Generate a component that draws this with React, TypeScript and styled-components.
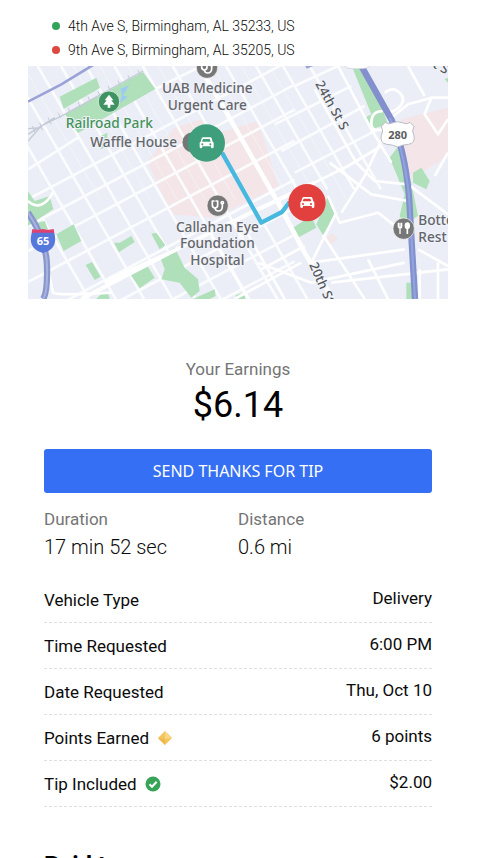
import React from "react";
import styled, { createGlobalStyle } from "styled-components";

const GlobalStyle = createGlobalStyle`
  * { box-sizing: border-box; }
  body {
    margin: 0;
    background: #fff;
    color: #0b0b0b;
    font-family: Roboto, "Liberation Sans", sans-serif;
    font-size: 17px;
  }
`;

const Page = styled.main`
  padding: 14px 32px 24px 28px;
`;

const Stops = styled.ul`
  list-style: none;
  margin: 0;
  padding: 0 24px 4px;
`;

const Stop = styled.li<{ $color: string }>`
  display: flex;
  align-items: center;
  gap: 8px;
  font-size: 14px;
  font-weight: 300;
  line-height: 24px;
  &::before {
    content: "";
    width: 8px;
    height: 8px;
    border-radius: 50%;
    background: ${(p) => p.$color};
  }
`;

const MapSvg = styled.svg`
  display: block;
  width: 100%;
  height: auto;
  font-family: "Noto Sans", sans-serif;
`;

const PlaceLabel = styled.text`
  font-size: 41px;
  font-weight: 500;
  fill: #63666a;
  stroke: #f1f3f9;
  stroke-width: 6px;
  paint-order: stroke;
`;

const ParkLabel = styled(PlaceLabel)`
  fill: #43915a;
`;

const StreetLabel = styled(PlaceLabel)`
  font-size: 39px;
  fill: #55585d;
`;

const Details = styled.section`
  padding: 56px 16px 0;
`;

const Earnings = styled.div`
  text-align: center;
`;

const Caption = styled.div`
  color: #757575;
  font-weight: 400;
  line-height: 28px;
`;

const Amount = styled.div`
  color: #000;
  font-size: 36px;
  line-height: 44px;
`;

const ThanksButton = styled.button`
  display: block;
  width: 100%;
  margin-top: 22px;
  padding: 10px;
  border: 0;
  border-radius: 3px;
  background: #356ff3;
  color: #fff;
  font-family: "Noto Sans", sans-serif;
  font-size: 16px;
  line-height: 24px;
`;

const Stats = styled.dl`
  display: grid;
  grid-template-columns: 1fr 1fr;
  margin: 0;
  padding: 12px 0 16px;
`;

const StatName = styled.dt`
  color: #757575;
  line-height: 28px;
`;

const StatValue = styled.dd`
  margin: 0;
  font-size: 20px;
  font-weight: 300;
  line-height: 28px;
`;

const Facts = styled.dl`
  margin: 0;
`;

const Fact = styled.div`
  display: flex;
  justify-content: space-between;
  align-items: flex-start;
  padding: 11px 0 10px;
  border-bottom: 1px dashed #e0e0e0;
`;

const FactName = styled.dt`
  display: flex;
  align-items: center;
  gap: 8px;
  line-height: 24px;
`;

const FactValue = styled.dd`
  margin: 0;
  line-height: 20px;
`;

const PaidHeading = styled.h2`
  margin: 44px 0 0;
  color: #000;
  font-size: 24px;
  font-weight: 700;
  line-height: 28px;
`;

const avenues = [400, 480, 555, 648, 765, 850, 930, 1010];
const streets = [-221, -141, -56, 29, 99, 174, 259, 344, 434, 594, 684, 765, 845];
const minorStreets = [-14, 136, 216, 300, 390, 554, 640, 725];

const Car = () => (
  <path
    fill="#fff"
    fillRule="evenodd"
    d="M-12-17h24q3 0 4 3l3 10 3 3v13q0 4-4 4t-4-4v-2h-26v2q0 4-4 4t-4-4V-1l3-3 3-10q1-3 4-3zM-10-12l-3 8h26l-3-8zM-12 1a3 3 0 1 0 .1 0zM12 1a3 3 0 1 0 .1 0z"
  />
);

const Stethoscope = () => (
  <g fill="none" stroke="#fff" strokeWidth="5" strokeLinecap="round" strokeLinejoin="round">
    <path d="M-11-14h-5v12q0 9 8 9t8-9v-12h-5" />
    <path d="M-8 7q1 9 10 9 11 0 12-12v-7" />
    <circle cx="14" cy="-9" r="3.5" />
  </g>
);

function RouteMap() {
  return (
    <MapSvg viewBox="0 0 1260 699" role="img" aria-label="Route map">
      <rect width="1260" height="699" fill="#ebeef7" />

      <g fill="#f4e5e8">
        <path d="M358 285 440 185 520 160 540 210 690 165 752 360 560 455 430 445z" />
        <path d="M1120 160 1260 125V270L1150 340 1120 240z" />
        <path d="M910 500 930 515 910 535 893 520z" />
      </g>

      <g fill="none" stroke="#fbfcfe" strokeLinejoin="round">
        <g strokeWidth="8">
          {avenues.map((y) => (
            <path key={y} d={`M0 ${y} 800 ${y - 424}`} />
          ))}
          <path d="M0 310 150 215M382 69 520 0" />
        </g>
        <g strokeWidth="8">
          {streets.map((x) => (
            <path key={x} d={`M${x} 0 ${x > 440 ? x + 214 : x + 404} ${x > 440 ? 370 : 699}`} />
          ))}
        </g>
        <g strokeWidth="3" opacity=".5">
          {minorStreets.map((x) => (
            <path key={x} d={`M${x} 0 ${x + 231} 400`} />
          ))}
        </g>
        <path strokeWidth="8" d="M800 60 930 0M740 175 970 60M760 255 1010 120M800 320 1050 190" />
      </g>

      <g fill="#afe0b9">
        <path d="M95 92 205 35 216 66 107 128z" />
        <path d="M110 144 345 18 382 69 150 201z" />
        <path d="M218 210 238 200 238 240 218 250z" />
        <path d="M0 375 20 405 65 390 76 430 0 480z" />
        <path d="M30 470 50 465 60 490H25z" />
        <path d="M85 505 137 475 160 525 107 555z" />
        <path d="M258 530 275 530 310 510 320 528 273 559z" />
        <path d="M173 597 192 588 218 632 200 642z" />
        <path d="M307 625 355 595 380 635 335 667z" />
        <path d="M370 503 385 500 412 538 395 550z" />
        <path d="M395 570 440 545 470 605 510 640 515 675 490 695 455 650 400 640 410 610z" />
        <path d="M205 699 220 683 240 680 245 699zM495 699 560 670 563 690 545 699zM620 699 625 687 650 680 652 699z" />
        <path d="M795 485 850 450 865 485 812 514z" />
        <path d="M865 475 900 390 925 440 885 507z" />
        <path d="M975 10 1003 5 1060 120 1080 175 1030 190 1010 155 1030 145z" />
        <path d="M1085 275 1115 235 1150 350 1170 450 1130 475 1115 450 1130 385z" />
        <path d="M1155 320 1180 305 1205 345 1195 370 1155 350z" />
        <path d="M1135 650h22l4 49h-26zM1250 40 1260 35V50z" />
      </g>
      <path d="M278 68 304 58 285 88 298 93 275 112 282 88z" fill="#9dc9f6" />

      <g fill="none" stroke="#fff" strokeWidth="8" strokeLinejoin="round">
        <path strokeWidth="14" d="M514 0 590 130 750 410 830 560 915 699" />
        <path strokeWidth="12" d="M160 699 430 558 690 430 860 350M430 558 230 649" />
        <path d="M0 405Q40 440 75 380M50 560 75 680Q90 690 250 680" />
        <path d="M930 0 1030 190 1090 290M860 70 985 290 1040 345 1140 355M860 350 960 300 1060 240" />
        <path d="M905 290 1030 385 1140 405M940 440 1010 330 1075 190M900 390 935 470 1050 440 1140 510" />
        <path d="M1090 155 1140 115 1210 95 1260 95M1210 95 1190 145 1230 205 1260 160M1260 260 1220 330" />
        <path d="M1140 355 1260 445M850 590 1130 550M910 650 1260 610M690 590 850 650 1130 590M1020 580 1080 699" />
        <path d="M1070 80q25-20 45 0t0 42-45 12M1065 135q-35 0-35 35t45 15M1140 0 1190 90" />
        <path d="M885 507 1010 699M750 400 870 640M925 440 850 590M1170 550 1260 600M1175 610V699M1230 590V699" />
        <path d="M640 470 770 699M550 510 660 699M700 610 830 540M620 699 820 590" />
      </g>

      <g fill="none" stroke="#c3cbd6">
        <path strokeWidth="4" d="M0 225 40 180 110 145 345 15M0 188 40 185M0 205 80 155" />
        <path
          strokeWidth="3"
          d="M13 180l8 20M35 170l8 22M60 155l10 20M90 140l8 16M120 125l8 16M150 108l8 18M180 92l8 18M210 76l8 18M240 60l8 18M270 44l8 18M300 28l8 18M330 12l8 18"
        />
      </g>

      <g fill="none" strokeLinecap="butt">
        <path d="M0 107 100 55 195-3" stroke="#9ba2d7" strokeWidth="8" />
        <path d="M0 440Q55 520 57 600T45 699" stroke="#8996cc" strokeWidth="19" />
        <path d="M0 440Q55 520 57 600T45 699" stroke="#a7b4df" strokeWidth="6" />
        <path d="M1000 0 1090 160Q1130 250 1143 390L1161 699" stroke="#8490ce" strokeWidth="19" />
        <path d="M1085 155Q1128 250 1143 390L1161 699" stroke="#91a5dd" strokeWidth="6" />
      </g>
      <path d="M832 0h24l-20 8z" fill="#9ba2d7" />

      <path d="M945-4h85q-8 14-42 12-34 2-43-12z" fill="#fff" stroke="#c9ccd3" strokeWidth="2" />
      <path
        d="M1072 169q10 8 20 2 17-8 34 0 10 6 20-2l12 12q-8 14 0 28 5 22-16 26-19 1-33 8-14-7-33-8-21-4-16-26 8-14 0-28z"
        fill="#fff"
        stroke="#b9bdc7"
        strokeWidth="3"
      />
      <text x="1109" y="218" textAnchor="middle" fontSize="33" fontWeight="700" fill="#5b5d61">280</text>

      <path d="M12 498h66q15 50-33 63-48-13-33-63z" fill="#5677dc" />
      <path d="M13 489q16 5 32 0 16 5 32 0l2 11H11z" fill="#de4370" />
      <text x="45" y="538" textAnchor="middle" fontSize="33" fontWeight="700" fill="#fff">65</text>

      <path d="M582 260 700 470 762 438 785 408" fill="none" stroke="#49b8df" strokeWidth="13" strokeLinejoin="round" />

      <g stroke="#fff" strokeWidth="2">
        <circle cx="243" cy="107" r="32" fill="#3f9362" />
        <circle cx="537" cy="5" r="32" fill="#777" />
        <circle cx="493" cy="229" r="31" fill="#777" />
        <circle cx="569" cy="419" r="32" fill="#777" />
        <circle cx="1127" cy="488" r="32" fill="#777" />
      </g>
      <path d="M243 86 230 103h6l-10 13h13v9h8v-9h13l-10-13h6z" fill="#fff" />
      <g transform="translate(537 5)"><Stethoscope /></g>
      <g transform="translate(569 419)"><Stethoscope /></g>
      <path d="M1111 470v10q0 6 5 6t5-6v-10M1116 470v34" fill="none" stroke="#fff" strokeWidth="4" />
      <path d="M1138 504v-20" stroke="#fff" strokeWidth="5" />
      <ellipse cx="1138" cy="479" rx="8" ry="10" fill="#fff" />

      <ParkLabel x="244" y="185" textAnchor="middle">Railroad Park</ParkLabel>
      <PlaceLabel x="317" y="242" textAnchor="middle">Waffle House</PlaceLabel>
      <PlaceLabel x="538" y="82" textAnchor="middle">UAB Medicine</PlaceLabel>
      <PlaceLabel x="538" y="132" textAnchor="middle">Urgent Care</PlaceLabel>
      <PlaceLabel x="568" y="497" textAnchor="middle">Callahan Eye</PlaceLabel>
      <PlaceLabel x="568" y="547" textAnchor="middle">Foundation</PlaceLabel>
      <PlaceLabel x="568" y="597" textAnchor="middle">Hospital</PlaceLabel>
      <PlaceLabel x="1171" y="477">Botto</PlaceLabel>
      <PlaceLabel x="1171" y="527">Rest</PlaceLabel>
      <StreetLabel transform="translate(861 53) rotate(61)">24th St S</StreetLabel>
      <StreetLabel transform="translate(843 596) rotate(66)">20th St</StreetLabel>
      <StreetLabel transform="translate(1212 3) rotate(28)">t S</StreetLabel>

      <circle cx="535" cy="231" r="56" fill="#3f9f7c" />
      <g transform="translate(535 231)"><Car /></g>
      <circle cx="837" cy="410" r="56" fill="#e2403f" />
      <g transform="translate(837 410)"><Car /></g>
    </MapSvg>
  );
}

const PointsIcon = () => (
  <svg width="16" height="16" viewBox="0 0 16 16" aria-hidden="true">
    <path d="M8 1 15 8 8 15 1 8z" fill="#f3c65d" />
    <path d="M8 1 15 8 8 9z" fill="#f7d786" />
    <path d="M1 8 8 9v6z" fill="#eeb84a" />
  </svg>
);

const TipIcon = () => (
  <svg width="16" height="16" viewBox="0 0 16 16" aria-hidden="true">
    <circle cx="8" cy="8" r="7.5" fill="#38a457" />
    <path d="M4.5 8.2 7 10.7l4.7-5" fill="none" stroke="#fff" strokeWidth="2" />
  </svg>
);

const facts: { name: string; value: string; icon?: React.ReactNode }[] = [
  { name: "Vehicle Type", value: "Delivery" },
  { name: "Time Requested", value: "6:00 PM" },
  { name: "Date Requested", value: "Thu, Oct 10" },
  { name: "Points Earned", value: "6 points", icon: <PointsIcon /> },
  { name: "Tip Included", value: "$2.00", icon: <TipIcon /> },
];

export default function App() {
  return (
    <>
      <GlobalStyle />
      <Page>
        <Stops>
          <Stop $color="#34a45b">4th Ave S, Birmingham, AL 35233, US</Stop>
          <Stop $color="#dc4a3f">9th Ave S, Birmingham, AL 35205, US</Stop>
        </Stops>
        <RouteMap />
        <Details>
          <Earnings>
            <Caption>Your Earnings</Caption>
            <Amount>$6.14</Amount>
          </Earnings>
          <ThanksButton type="button">SEND THANKS FOR TIP</ThanksButton>
          <Stats>
            <div>
              <StatName>Duration</StatName>
              <StatValue>17 min 52 sec</StatValue>
            </div>
            <div>
              <StatName>Distance</StatName>
              <StatValue>0.6 mi</StatValue>
            </div>
          </Stats>
          <Facts>
            {facts.map((f) => (
              <Fact key={f.name}>
                <FactName>
                  {f.name}
                  {f.icon}
                </FactName>
                <FactValue>{f.value}</FactValue>
              </Fact>
            ))}
          </Facts>
          <PaidHeading>Paid to you</PaidHeading>
        </Details>
      </Page>
    </>
  );
}
